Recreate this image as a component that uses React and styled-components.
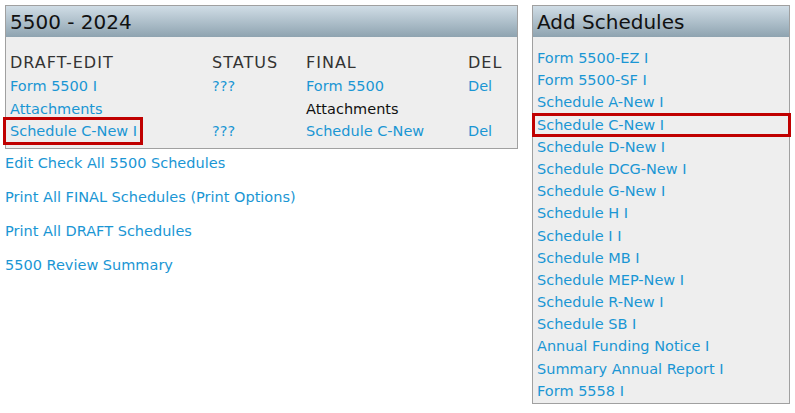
import styled, { createGlobalStyle } from "styled-components";

const GlobalStyle = createGlobalStyle`
  html, body {
    margin: 0;
    padding: 0;
    background: #ffffff;
  }
  body {
    font-family: "DejaVu Sans", Verdana, sans-serif;
    font-size: 14.5px;
  }
`;

const Page = styled.div`
  display: flex;
  align-items: flex-start;
  gap: 14px;
  padding: 5px 0 0 5px;
  width: 795px;
  height: 413px;
  box-sizing: border-box;
`;

const LeftCol = styled.div`
  width: 513px;
  display: flex;
  flex-direction: column;
`;

const Panel = styled.div`
  border: 1px solid #a0a0a0;
  background: #eeeeee;
  width: ${(p) => p.$width}px;
  height: ${(p) => p.$height}px;
  box-sizing: border-box;
`;

const PanelHeader = styled.div`
  height: 31px;
  background: linear-gradient(#d0dde6, #8ea3b0);
  font-size: 20px;
  color: #111;
  padding: 4px 4px 0;
  box-sizing: border-box;
  line-height: 25px;
`;

const Table = styled.div`
  display: grid;
  grid-template-columns: 202px 94px 162px 1fr;
  padding: 13px 0 0 4px;
`;

const ColHead = styled.div`
  font-size: 16px;
  letter-spacing: 1px;
  color: #333;
  height: 25px;
  line-height: 25px;
`;

const Cell = styled.div`
  height: 22.5px;
  line-height: 22.5px;
  color: ${(p) => (p.$plain ? "#111" : "#1a96d4")};
  white-space: nowrap;
`;

const Boxed = styled.span`
  display: inline-block;
  line-height: 19px;
  outline: 3px solid #c00000;
  margin-left: -4px;
  padding: 2px 3px 1px 4px;
`;

const Actions = styled.div`
  display: flex;
  flex-direction: column;
  gap: 17px;
  padding-top: 6px;
`;

const Link = styled.a`
  color: #1a96d4;
  text-decoration: none;
  line-height: 17px;
  cursor: pointer;
`;

const List = styled.div`
  display: flex;
  flex-direction: column;
  padding: 10px 0 0 4px;
`;

const ListItem = styled.div`
  height: 22.2px;
  line-height: 22px;
  color: #1a96d4;
  white-space: nowrap;
  margin: ${(p) => (p.$boxed ? "0 -1px 0 -4px" : "0")};
  padding-left: ${(p) => (p.$boxed ? "4px" : "0")};
  outline: ${(p) => (p.$boxed ? "3px solid #c00000" : "none")};
  outline-offset: -2px;
`;

const schedules = [
  "Form 5500-EZ I",
  "Form 5500-SF I",
  "Schedule A-New I",
  "Schedule C-New I",
  "Schedule D-New I",
  "Schedule DCG-New I",
  "Schedule G-New I",
  "Schedule H I",
  "Schedule I I",
  "Schedule MB I",
  "Schedule MEP-New I",
  "Schedule R-New I",
  "Schedule SB I",
  "Annual Funding Notice I",
  "Summary Annual Report I",
  "Form 5558 I",
];

export default function App() {
  return (
    <>
      <GlobalStyle />
      <Page>
        <LeftCol>
          <Panel $width={513} $height={144}>
            <PanelHeader>5500 - 2024</PanelHeader>
            <Table>
              <ColHead>DRAFT-EDIT</ColHead>
              <ColHead>STATUS</ColHead>
              <ColHead>FINAL</ColHead>
              <ColHead>DEL</ColHead>

              <Cell>Form 5500 I</Cell>
              <Cell>???</Cell>
              <Cell>Form 5500</Cell>
              <Cell>Del</Cell>

              <Cell>Attachments</Cell>
              <Cell />
              <Cell $plain>Attachments</Cell>
              <Cell />

              <Cell>
                <Boxed>Schedule C-New I</Boxed>
              </Cell>
              <Cell>???</Cell>
              <Cell>Schedule C-New</Cell>
              <Cell>Del</Cell>
            </Table>
          </Panel>
          <Actions>
            <Link>Edit Check All 5500 Schedules</Link>
            <Link>Print All FINAL Schedules (Print Options)</Link>
            <Link>Print All DRAFT Schedules</Link>
            <Link>5500 Review Summary</Link>
          </Actions>
        </LeftCol>
        <Panel $width={258} $height={399}>
          <PanelHeader>Add Schedules</PanelHeader>
          <List>
            {schedules.map((s) => (
              <ListItem key={s} $boxed={s === "Schedule C-New I"}>
                {s}
              </ListItem>
            ))}
          </List>
        </Panel>
      </Page>
    </>
  );
}
